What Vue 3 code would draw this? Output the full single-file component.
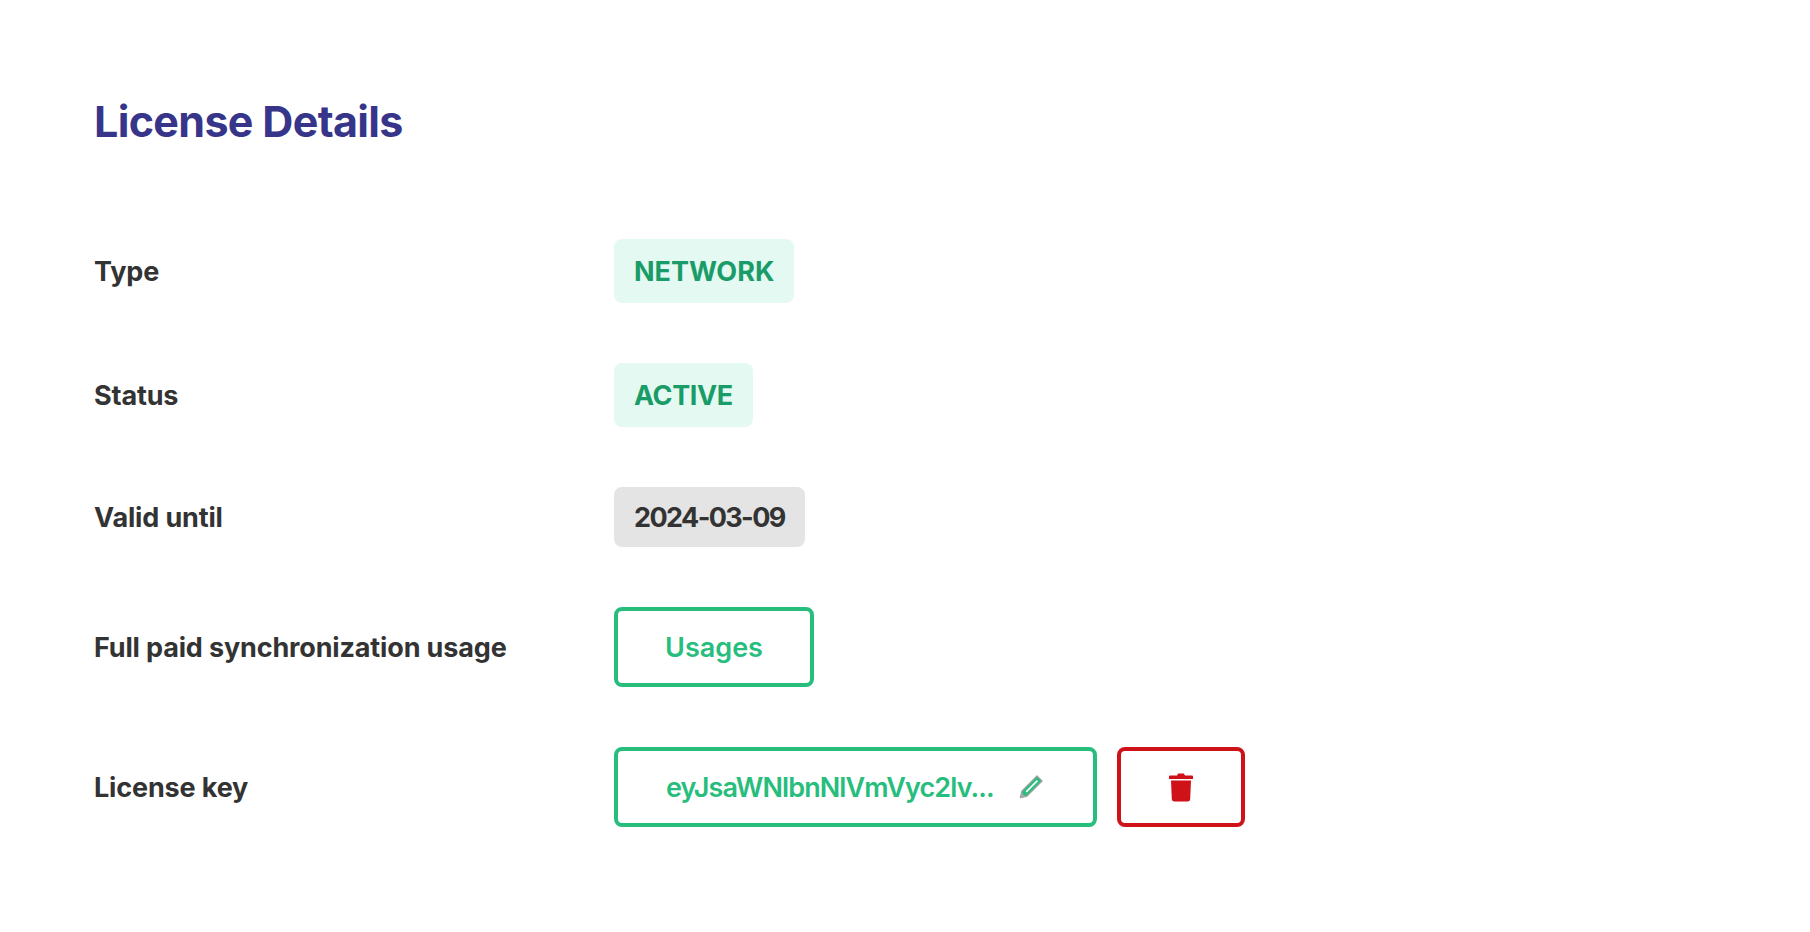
<script setup>
const green = 'badge-green'
const rows = [
  { label: 'Type', value: 'NETWORK', badge: green },
  { label: 'Status', value: 'ACTIVE', badge: `${green} badge-tight` },
  { label: 'Valid until', value: '2024-03-09', badge: 'badge-grey' },
]
</script>

<template>
  <main class="page">
    <h1 class="title">License Details</h1>

    <div class="details">
      <template v-for="row in rows" :key="row.label">
        <span class="label">{{ row.label }}</span>
        <div class="value">
          <span class="badge" :class="row.badge">{{ row.value }}</span>
        </div>
      </template>

      <span class="label">Full paid synchronization usage</span>
      <div class="value">
        <button class="btn btn-usages">Usages</button>
      </div>

      <span class="label">License key</span>
      <div class="value">
        <button class="btn btn-key">
          <span class="key-text">eyJsaWNlbnNlVmVyc2lv...</span>
          <svg class="pencil" viewBox="0 0 26 26" width="26" height="26">
            <path d="M19 2 24 7 9 22 2.5 23.5 4 17Z" fill="#27bd7d" stroke="#9aa39e" stroke-width="1.4" stroke-linejoin="round" />
            <path d="M18.8 6 20 7.2 8.8 18.4 7.6 17.2Z" fill="#fff" />
            <path d="M2 24 3.4 18.4 7.6 22.6Z" fill="#a3a8a5" />
          </svg>
        </button>
        <button class="btn btn-delete" aria-label="Delete">
          <svg viewBox="0 0 24 29" width="24" height="29">
            <path d="M8 2.6 9.2.6h5.6L16 2.6h7a1 1 0 0 1 1 1V6H0V3.6a1 1 0 0 1 1-1Z" fill="#cf1118" />
            <path d="M2 7.5h20l-.8 18.7a2.6 2.6 0 0 1-2.6 2.4H5.4a2.6 2.6 0 0 1-2.6-2.4Z" fill="#cf1118" />
          </svg>
        </button>
      </div>
    </div>
  </main>
</template>

<style>
body {
  background: #fff;
}
</style>

<style scoped>
.page {
  padding: 91px 94px 0;
  font-family: Inter, "Liberation Sans", sans-serif;
  color: #333;
}

.title {
  margin: 0 0 88px;
  font-size: 43px;
  line-height: 60px;
  font-weight: 700;
  color: #37358a;
  letter-spacing: -0.65px;
}

.details {
  display: grid;
  grid-template-columns: 520px 1fr;
  row-gap: 60px;
  align-items: center;
}

.label {
  font-size: 27px;
  font-weight: 700;
  letter-spacing: -0.15px;
}

.value {
  display: flex;
  gap: 20px;
}

.badge {
  display: inline-flex;
  align-items: center;
  height: 64px;
  padding: 0 20px;
  border-radius: 8px;
  font-size: 27px;
  font-weight: 700;
}

.badge-green {
  background: #e4f9f2;
  color: #1a9c68;
}

.badge-tight {
  letter-spacing: -0.4px;
}

.badge-grey {
  height: 60px;
  background: #e4e4e4;
  color: #333;
  letter-spacing: -1.6px;
}

.btn {
  display: inline-flex;
  align-items: center;
  box-sizing: border-box;
  height: 80px;
  padding: 0;
  border: 4px solid #27bd7d;
  border-radius: 8px;
  background: #fff;
  font-family: inherit;
  font-size: 27px;
  font-weight: 600;
  color: #27bd7d;
}

.btn-usages {
  width: 200px;
  justify-content: center;
}

.btn-key {
  width: 483px;
  padding-left: 48px;
  gap: 24px;
}

.key-text {
  letter-spacing: -0.9px;
}

.btn-delete {
  width: 128px;
  justify-content: center;
  border-color: #cf1118;
}
</style>
